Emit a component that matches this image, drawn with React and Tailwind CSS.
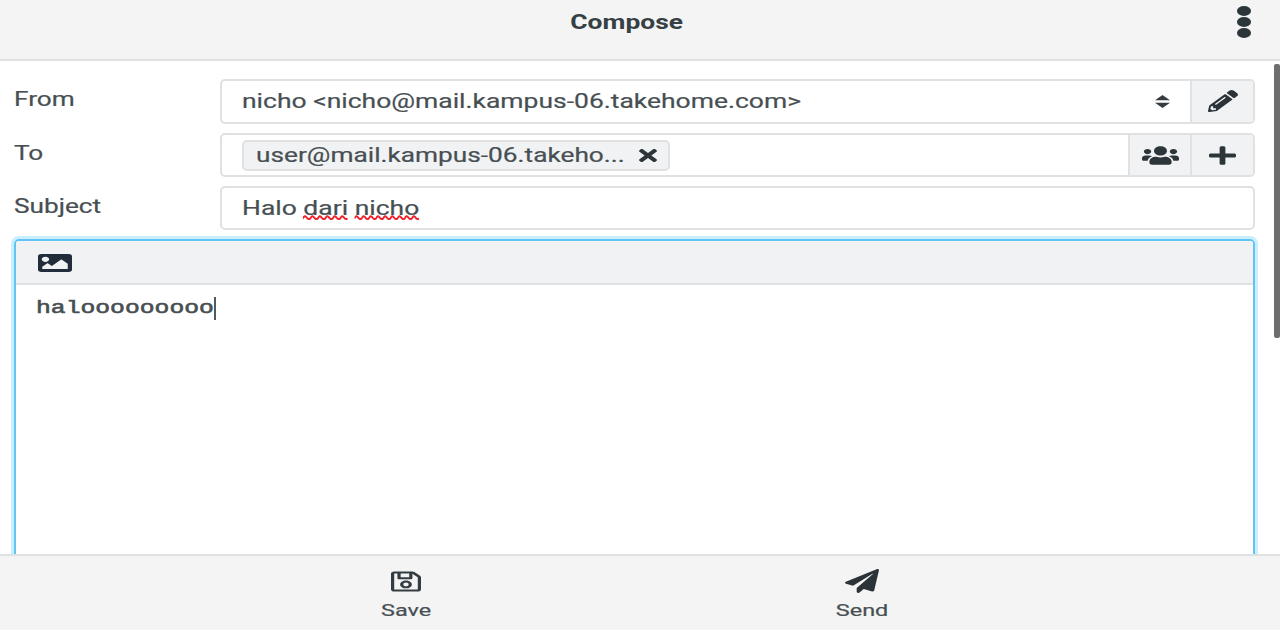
import React from "react";
import {
  FaPencilAlt,
  FaUsers,
  FaPlus,
  FaTimes,
  FaImage,
  FaPaperPlane,
  FaRegSave,
} from "react-icons/fa";

const stretch = { preserveAspectRatio: "none" };

function Label({ children }) {
  return (
    <div className="w-[206px] shrink-0 pt-px leading-[38px]">
      <span className="inline-block origin-left scale-x-[1.31]">{children}</span>
    </div>
  );
}

function Squiggle({ children, wave }) {
  return (
    <span className="relative">
      {children}
      <svg
        className="absolute left-0 top-[18px] h-[6px] w-full"
        viewBox={`0 0 ${wave * 8} 6`}
        preserveAspectRatio="none"
        fill="none"
        stroke="#f3202b"
        strokeWidth="2"
      >
        <path d={"M0 4.5" + " q2 -4 4 -1.2 q2 2.8 4 1.2".repeat(wave)} />
      </svg>
    </span>
  );
}

function FooterButton({ icon, children }) {
  return (
    <button className="flex w-[120px] flex-col items-center">
      <span className="flex h-[24px] items-center">{icon}</span>
      <span className="mt-[6px] inline-block scale-x-[1.38] text-[17px] leading-[22px]">{children}</span>
    </button>
  );
}

export default function App() {
  return (
    <div className="flex h-[630px] w-[1280px] flex-col overflow-hidden bg-white font-['Roboto',sans-serif] text-[20px] text-[#474f53] [-webkit-text-stroke:0.2px_currentColor]">
      <header className="flex h-[61px] shrink-0 border-b-2 border-[#e0e1e2] bg-[#f4f4f4]">
        <div className="w-[43px]" />
        <h1 className="ml-[-26px] flex-1 pt-[8px] text-center font-bold leading-[28px] text-[#353f44] [-webkit-text-stroke:0px]">
          <span className="inline-block scale-x-[1.32]">Compose</span>
        </h1>
        <button className="mr-[29px] flex w-[14px] flex-col gap-[1px] pt-[6px]">
          <span className="h-[10px] w-[14px] rounded-[50%] bg-[#2b363b]" />
          <span className="h-[10px] w-[14px] rounded-[50%] bg-[#2b363b]" />
          <span className="h-[10px] w-[14px] rounded-[50%] bg-[#2b363b]" />
        </button>
      </header>

      <main className="flex min-h-0 flex-1 overflow-hidden">
        <div className="flex w-[1255px] shrink-0 flex-col pl-[14px] pt-[18px]">
          <div className="flex h-[45px] shrink-0">
            <Label>From</Label>
            <div className="flex flex-1 overflow-hidden rounded-[5px] border-2 border-[#dfe1e3]">
              <div className="flex flex-1 items-center justify-between pl-[20px] pr-[20px]">
                <span className="mb-[2px] inline-block origin-left whitespace-nowrap scale-x-[1.324] leading-[38px]">
                  nicho &lt;nicho@mail.kampus-06.takehome.com&gt;
                </span>
                <svg className="h-[13px] w-[15px]" viewBox="0 0 15 13" fill="#343c41">
                  <path d="M7.5 0 15 5.3H0zM7.5 13 0 7.7h15z" />
                </svg>
              </div>
              <div className="flex w-[63px] items-center justify-center border-l-2 border-[#dfe1e3] bg-[#f1f2f4]">
                <FaPencilAlt {...stretch} className="mb-[2px] h-[22px] w-[30px] text-[#2b3338]" />
              </div>
            </div>
          </div>

          <div className="mt-[9px] flex h-[44px] shrink-0">
            <Label>To</Label>
            <div className="flex flex-1 overflow-hidden rounded-[5px] border-2 border-[#dfe1e3]">
              <div className="flex flex-1 items-center pl-[20px]">
                <div className="flex h-[31px] w-[428px] items-center justify-between rounded-[5px] border-2 border-[#dfe1e3] bg-[#f1f2f4] pl-[12px] pr-[11px]">
                  <span className="inline-block origin-left whitespace-nowrap scale-x-[1.313] leading-[27px]">
                    user@mail.kampus-06.takeho...
                  </span>
                  <FaTimes {...stretch} className="h-[19px] w-[18px] text-[#2c363a]" />
                </div>
              </div>
              <div className="flex w-[62px] items-center justify-center border-l-2 border-[#dfe1e3] bg-[#f1f2f4]">
                <FaUsers {...stretch} className="h-[21px] w-[37px] text-[#2c363a]" />
              </div>
              <div className="flex w-[63px] items-center justify-center border-l-2 border-[#dfe1e3] bg-[#f1f2f4]">
                <FaPlus {...stretch} className="h-[21px] w-[27px] text-[#2c363a]" />
              </div>
            </div>
          </div>

          <div className="mt-[9px] flex h-[44px] shrink-0">
            <Label>Subject</Label>
            <div className="flex flex-1 items-center rounded-[5px] border-2 border-[#dfe1e3] pl-[20px]">
              <span className="inline-block origin-left whitespace-nowrap scale-x-[1.323] leading-[38px]">
                Halo <Squiggle wave={6}>dari</Squiggle> <Squiggle wave={9}>nicho</Squiggle>
              </span>
            </div>
          </div>

          <section className="mt-[9px] flex h-[360px] shrink-0 flex-col rounded-[5px] border-2 border-[#62c4f4] shadow-[0_0_0_3px_#c9eefe]">
            <div className="flex h-[44px] items-center rounded-t-[3px] border-b-2 border-[#dfe1e3] bg-[#f1f2f4] pl-[22px] pt-px">
              <FaImage {...stretch} className="h-[24px] w-[34px] text-[#222d3b]" />
            </div>
            <div className="flex items-center pl-[20px] pt-[11px] font-['Liberation_Mono',monospace] text-[19px] leading-[24px]">
              <div className="w-[178px]">
                <span className="inline-block origin-left scale-x-[1.3] [-webkit-text-stroke:0.6px_currentColor]">halooooooooo</span>
              </div>
              <span className="h-[23px] w-[2px] bg-[#52595c]" />
            </div>
          </section>
        </div>
        <div className="ml-[19px] mt-[3px] h-[274px] w-[6px] rounded-[2px] bg-[#6e6e6e]" />
      </main>

      <footer className="flex h-[76px] shrink-0 border-t-2 border-[#e0e1e2] bg-[#f4f4f4] pl-[346px] pt-[13px]">
        <FooterButton icon={<FaRegSave {...stretch} className="h-[23px] w-[30px] text-[#333c41]" />}>Save</FooterButton>
        <div className="w-[336px]" />
        <FooterButton icon={<FaPaperPlane {...stretch} className="h-[24px] w-[34px] text-[#2b3338]" />}>Send</FooterButton>
      </footer>
    </div>
  );
}
